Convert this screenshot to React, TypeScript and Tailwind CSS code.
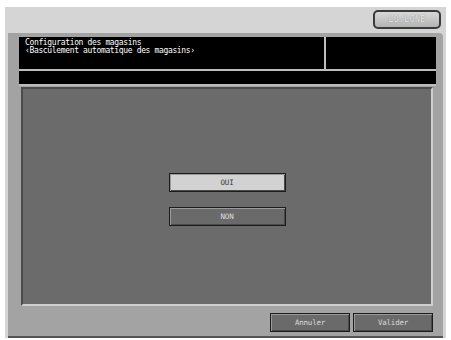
import React from "react";

const mono = { fontFamily: '"DejaVu Sans Mono", "Liberation Mono", monospace' };

function PanelButton({ label, light, className }: { label: string; light?: boolean; className?: string }) {
  return (
    <div
      className={
        "flex items-center justify-center border border-[#1c1c1c] text-[7.5px] leading-none tracking-[-0.2px] shadow-[inset_1px_1px_0_#9a9a9a,inset_-1px_-1px_0_#4a4a4a] " +
        (light ? "bg-[#d2d2d2] text-[#3a3a3a] " : "bg-[#6a6a6a] text-[#dcdcdc] ") +
        (className ?? "")
      }
      style={mono}
    >
      {label}
    </div>
  );
}

export default function App() {
  return (
    <div className="w-[451px] h-[340px] bg-white pt-[7px] pl-[5px]">
      <div className="w-[441px] h-[331px] bg-[#d5d5d5] flex flex-col">
        {/* top strip with faded mode button */}
        <div className="h-[26px] flex justify-end items-start pt-[3px] pr-[5px]">
          <div className="w-[68px] h-[19px] rounded-[5px] border-2 border-[#3a3a3a] bg-gradient-to-b from-[#d8d8d8] to-[#b4b4b4] flex items-center justify-center">
            <span
              className="text-[8px] leading-none tracking-[0.5px] text-[#ededed] [text-shadow:0_0_1px_#6a6a6a]"
              style={mono}
            >
              LO.LGNE
            </span>
          </div>
        </div>

        {/* main grey panel */}
        <div className="ml-[3px] w-[435px] flex-1 bg-[#a3a3a3] rounded-tr-[4px] border-b-2 border-[#555] pl-[11px] pr-[7px] pt-[4px] flex flex-col">
          {/* header */}
          <div className="w-[417px] bg-black flex flex-col border-b-2 border-[#bdbdbd]">
            <div className="h-[34px] flex border-b-2 border-[#bdbdbd]">
              <div
                className="w-[305px] pl-[6px] pt-[2px] text-[8px] leading-[8px] tracking-[-0.35px] text-white"
                style={mono}
              >
                <div>Configuration des magasins</div>
                <div>‹Basculement automatique des magasins›</div>
              </div>
              <div className="w-[2px] bg-[#bdbdbd]" />
              <div className="flex-1" />
            </div>
            <div className="h-[13px]" />
          </div>

          {/* content */}
          <div className="mt-[1px] ml-[2px] w-[412px] h-[219px] bg-[#6b6b6b] border-t-2 border-l-2 border-[#4c4c4c] border-r-2 border-b-2 border-r-[#cfcfcf] border-b-[#cfcfcf] flex flex-col items-center pt-[84px] gap-[15px]">
            <PanelButton label="OUI" light className="w-[117px] h-[19px]" />
            <PanelButton label="NON" className="w-[117px] h-[19px]" />
          </div>

          {/* footer buttons */}
          <div className="mt-[7px] flex justify-end gap-[3px] pr-[3px]">
            <PanelButton label="Annuler" className="w-[80px] h-[19px]" />
            <PanelButton label="Valider" className="w-[80px] h-[19px]" />
          </div>
        </div>
      </div>
    </div>
  );
}
